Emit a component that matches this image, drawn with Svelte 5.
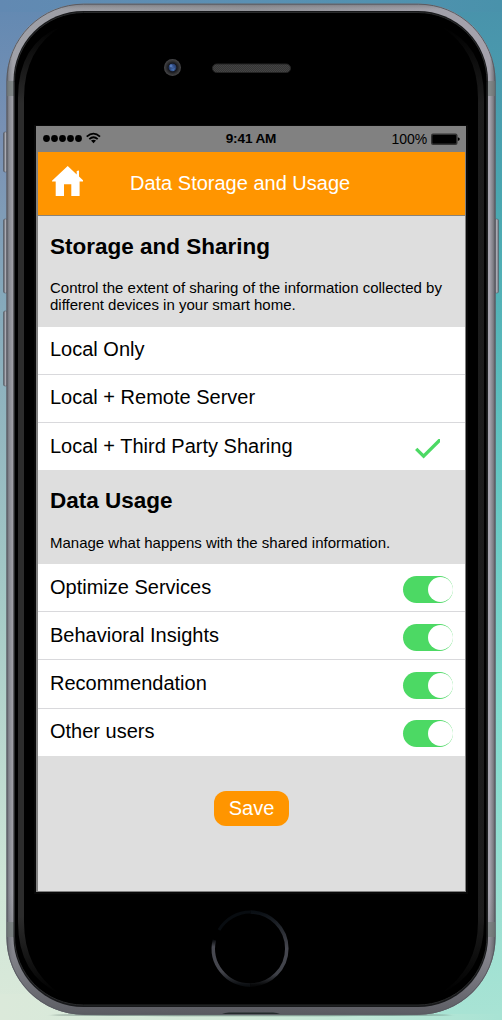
<script>
  const sharing = [
    { label: 'Local Only', height: 48 },
    { label: 'Local + Remote Server', height: 48 },
    { label: 'Local + Third Party Sharing', height: 47 }
  ];
  let selected = $state(2);
  let usage = $state([
    { label: 'Optimize Services', on: true, height: 48 },
    { label: 'Behavioral Insights', on: true, height: 48 },
    { label: 'Recommendation', on: true, height: 49 },
    { label: 'Other users', on: true, height: 47 }
  ]);
</script>

<div class="stage">
  <svg class="device" viewBox="0 0 502 1020" aria-hidden="true">
    <defs>
      <linearGradient id="side" x1="0" x2="1" y1="0" y2="0">
        <stop offset="0" stop-color="#62646c" /><stop offset=".006" stop-color="#898b93" />
        <stop offset=".013" stop-color="#a0a1a8" /><stop offset=".5" stop-color="#93949a" />
        <stop offset=".988" stop-color="#a5a3ad" /><stop offset=".994" stop-color="#85858c" /><stop offset="1" stop-color="#5c5d64" />
      </linearGradient>
      <linearGradient id="shade" x1="0" x2="0" y1="0" y2="1">
        <stop offset="0" stop-color="#55575e" stop-opacity=".5" /><stop offset=".006" stop-color="#888" stop-opacity="0" />
        <stop offset=".88" stop-color="#606168" stop-opacity="0" /><stop offset="1" stop-color="#4b4c52" stop-opacity=".8" />
      </linearGradient>
      <linearGradient id="edge" x1="0" x2="0" y1="0" y2="1">
        <stop offset="0" stop-color="#2c2c2c" stop-opacity="0" /><stop offset=".08" stop-color="#2c2c2c" />
        <stop offset=".92" stop-color="#2c2c2c" /><stop offset="1" stop-color="#2c2c2c" stop-opacity="0" />
      </linearGradient>
      <linearGradient id="button" x1="0" x2="1"><stop offset="0" stop-color="#4e5159" /><stop offset=".55" stop-color="#b3b4bc" /><stop offset="1" stop-color="#64666f" /></linearGradient>
      <linearGradient id="ringL" x1="0" x2="0" y1="0" y2="1"><stop offset="0" stop-color="#0a0c0f" /><stop offset=".15" stop-color="#484951" /><stop offset=".7" stop-color="#44454c" /><stop offset="1" stop-color="#0b0e11" /></linearGradient>
      <linearGradient id="ringR" x1="0" x2="0" y1="0" y2="1"><stop offset="0" stop-color="#0a0f14" /><stop offset=".5" stop-color="#46474f" /><stop offset=".85" stop-color="#3f4148" /><stop offset="1" stop-color="#070809" /></linearGradient>
      <radialGradient id="lens"><stop offset="0" stop-color="#42639f" /><stop offset=".4" stop-color="#283f70" /><stop offset=".5" stop-color="#15171e" /><stop offset=".75" stop-color="#303032" /><stop offset="1" stop-color="#48484a" /></radialGradient>
      <pattern id="mesh" width="2" height="2" patternUnits="userSpaceOnUse"><rect width="2" height="2" fill="#353535" /><path d="M0 0h1v1H0zM1 1h1v1H1z" fill="#444" /></pattern>
      <filter id="soft" x="-10%" y="-200%" width="120%" height="500%"><feGaussianBlur stdDeviation="2 .7" /></filter>
    </defs>
    <ellipse cx="251" cy="1015" rx="200" ry="1.3" fill="#4f6660" opacity=".55" filter="url(#soft)" />
    <g fill="url(#button)" stroke="#555861" stroke-width=".5">
      <rect x="3.5" y="132" width="4" height="40" rx="1.5" />
      <rect x="3.5" y="219" width="4" height="74" rx="1.5" />
      <rect x="3.5" y="311" width="4" height="75" rx="1.5" />
      <rect x="494.5" y="219" width="4" height="74" rx="1.5" />
    </g>
    <rect x="6.5" y="3.7" width="489" height="1011" rx="77" fill="url(#side)" />
    <rect x="6.5" y="3.7" width="489" height="1011" rx="77" fill="url(#shade)" />
    <rect x="7" y="4.2" width="488" height="1010" rx="76.5" fill="none" stroke="#595b62" />
    <path d="M7 81h8v15H7zM487 81h8v15h-8zM7 922h8v15H7zM487 922h8v15h-8z" fill="#707a76" opacity=".65" />
    <path d="M222 1014q3-1.5 7-1.5h44q4 0 7 1.5z" fill="#232a2b" />
    <rect x="13.5" y="11" width="474.5" height="996" rx="70" fill="#17181a" />
    <rect x="14.5" y="12.5" width="472.5" height="992.5" rx="69" fill="#000" stroke="#292a2b" />
    <rect x="16" y="14" width="469.5" height="990" rx="68" fill="#000" />
    <path d="M62 26Q18 43 18 98V922Q18 975 60 994Q24 969 24 922V98Q24 49 62 26Z" fill="url(#edge)" />
    <path d="M440 26Q484 43 484 98V922Q484 975 440 994Q478 969 478 922V98Q478 49 440 26Z" fill="url(#edge)" opacity=".65" />
    <rect x="34" y="125" width="434" height="769" fill="#080808" />
    <circle cx="172.5" cy="67.5" r="8.5" fill="url(#lens)" />
    <circle cx="171" cy="65.8" r="1.5" fill="#5277b8" /><path d="M170 70l5-2-1 3z" fill="#436dad" />
    <rect x="212.5" y="64" width="78" height="8.5" rx="4.2" fill="url(#mesh)" stroke="#242424" />
    <path d="M214.400 940A36.500 36.500 0 0 0 250.300 985" fill="none" stroke="url(#ringL)" stroke-width="3.5" />
    <path d="M250.300 912A36.500 36.500 0 0 1 250.300 985" fill="none" stroke="url(#ringR)" stroke-width="3.5" />
    <path d="M219 930A36.500 36.500 0 0 1 250.300 912" fill="none" stroke="#080c10" stroke-width="3" />
  </svg>

  <main class="screen">
    <div class="status">
      <div class="signal">
        <svg width="60" height="14" viewBox="0 0 60 14">
          <g><circle cx="4.5" cy="6.500" r="3.4" /><circle cx="12.5" cy="6.500" r="3.4" /><circle cx="20.5" cy="6.500" r="3.4" /><circle cx="28.5" cy="6.500" r="3.4" /><circle cx="36.5" cy="6.500" r="3.4" /></g>
          <g fill="none" stroke="#000" stroke-width="1.8"><path d="M44.700 4.600Q51.500-1.400 58 4.600M47.300 7.200Q51.500 3.200 55.700 7.200" /></g>
          <path d="M49 8.600Q51.500 6.800 54 8.600L51.500 11.300Z" />
        </svg>
      </div>
      <span class="clock">9:41 AM</span>
      <div class="power">
        <span>100%</span>
        <svg width="30" height="13" viewBox="0 0 30 13"><rect x="1" y=".6" width="26.500" height="11.400" rx="2" fill="#333" /><rect x="2.4" y="2" width="23.700" height="8.600" rx="1" /><path d="M27.8 4.2q2 .3 2 1.9t-2 1.9z" /></svg>
      </div>
    </div>

    <div class="content">
      <header>
        <svg class="home" width="32" height="32" viewBox="0 0 32 32"><path d="M15.700 2L24.700 10.400V7l2.300-.5V12.500L31 16.300V17.500H27.600V32H19.300V20.300H12V32H3.700V17.500H0V16.800Z" fill="#fff" /></svg>
        <span>Data Storage and Usage</span>
      </header>

      <section class="intro sharing">
        <h2>Storage and Sharing</h2>
        <p>Control the extent of sharing of the information collected by different devices in your smart home.</p>
      </section>
      <div class="list choices">
        {#each sharing as item, i}
          <button class="row" style:height="{item.height}px" onclick={() => (selected = i)}>
            <span>{item.label}</span>
            {#if selected === i}
              <svg class="check" width="26" height="22" viewBox="0 0 26 22"><path d="M2.200 9.900L9.600 17.200L27.500 -.7" fill="none" stroke="#4cd964" stroke-width="3.3" /></svg>
            {/if}
          </button>
        {/each}
      </div>

      <section class="intro usage">
        <h2>Data Usage</h2>
        <p>Manage what happens with the shared information.</p>
      </section>
      <div class="list switches">
        {#each usage as item}
          <button class="row" style:height="{item.height}px" onclick={() => (item.on = !item.on)}>
            <span>{item.label}</span>
            <span class="toggle" class:on={item.on}><span class="knob"></span></span>
          </button>
        {/each}
      </div>
      <button class="save">Save</button>
    </div>
  </main>
</div>

<style>
  .stage {
    position: relative;
    box-sizing: border-box;
    width: 502px;
    height: 1020px;
    padding: 126px 36px 128px 36px;
    overflow: hidden;
    background:
      linear-gradient(90deg, #6289b2, #5a90b3 50%, #4992ab) 0 0 / 100% 12px no-repeat,
      linear-gradient(#4992ab 0%, #4aa7b0 20%, #62c4c1 45%, #82dace 70%, #a8e3d4 100%) 100% 0 / 50% 1014px no-repeat,
      linear-gradient(90deg, #dbe9da, #d1ead9 50%, #a8e3d4) 0 100% / 100% 26px no-repeat,
      linear-gradient(#6289b2 0%, #7a91b4 14%, #86aabb 30%, #a6cbc7 60%, #cfe6d7 87%, #dbe9da 100%);
    font-family: "Liberation Sans", Arial, sans-serif;
    color: #000;
  }
  .device {
    position: absolute;
    inset: 0;
    width: 502px;
    height: 1020px;
  }
  .screen {
    position: relative;
    display: flex;
    flex-direction: column;
    width: 430px;
    height: 766px;
    background: #818181;
  }
  .status {
    display: grid;
    grid-template-columns: 1fr auto 1fr;
    align-items: center;
    box-sizing: border-box;
    height: 26px;
    padding: 0 6px;
    font-size: 13.5px;
  }
  .signal { display: flex; }
  .clock { font-weight: bold; font-size: 13.6px; letter-spacing: -.15px; margin-top: -1px; }
  .power { display: flex; justify-content: flex-end; align-items: center; gap: 3px; font-size: 14px; letter-spacing: -.1px; }
  .power span { margin-top: -1px; }
  .content {
    display: flex;
    flex-direction: column;
    width: 427px;
    height: 739px;
    margin-left: 2px;
    background: #dedede;
  }
  header {
    display: flex;
    align-items: center;
    gap: 46px;
    box-sizing: border-box;
    height: 64px;
    padding: 0 14px;
    border-bottom: 1px solid #8a8378;
    background: #ff9500;
    color: #fff;
    font-size: 20px;
  }
  .home { margin-top: -7px; }
  .intro { box-sizing: border-box; padding: 18px 12px 0; }
  .sharing { height: 111px; }
  .usage { height: 94px; }
  h2 { margin: 0 0 19px; font-size: 22.5px; line-height: 26px; }
  .usage h2 { margin-bottom: 20px; }
  p { margin: 0; font-size: 15px; line-height: 17px; }
  .list { display: flex; flex-direction: column; background: #fff; }
  button { border: 0; font: inherit; color: inherit; }
  .row {
    display: flex;
    justify-content: space-between;
    align-items: flex-start;
    box-sizing: border-box;
    padding: 11px 12px 0;
    border-bottom: 1px solid #d9d9dc;
    background: none;
    font-size: 20px;
    line-height: 23px;
    text-align: left;
  }
  .row:last-child { border-bottom: 0; }
  .choices .row:last-child,
  .switches .row:not(:last-child) { padding-top: 12px; }
  .check { margin: 4px 13px 0 0; }
  .toggle {
    box-sizing: border-box;
    width: 50px;
    height: 27px;
    padding: 1px;
    border-radius: 14px;
    background: #ccc;
  }
  .toggle.on { background: #4cd964; }
  .knob { display: block; width: 25px; height: 25px; border-radius: 50%; background: #fff; }
  .on .knob { margin-left: auto; margin-right: -.5px; }
  .save {
    align-self: center;
    width: 75px;
    height: 35px;
    margin-top: 35px;
    padding: 0;
    border-radius: 12px;
    background: #ff9500;
    color: #fff;
    font-size: 20px;
  }
</style>
